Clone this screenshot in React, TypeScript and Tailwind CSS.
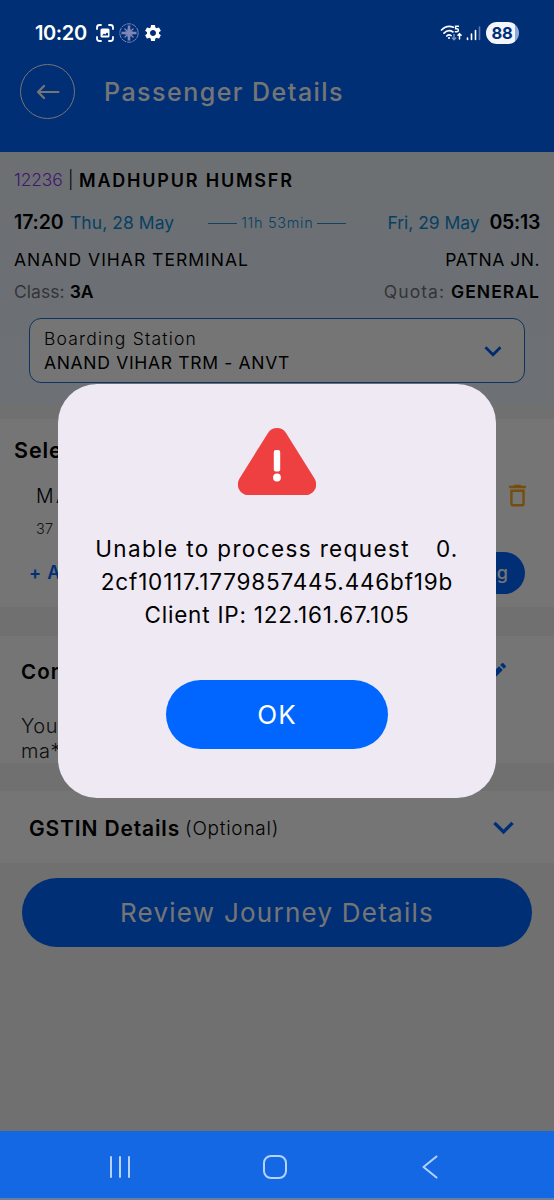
import { MdDeleteOutline, MdEdit, MdKeyboardArrowDown, MdSettings } from "react-icons/md";

function StatusBar() {
    return (
        <div className="absolute top-0 left-0 z-20 flex h-[66px] w-full items-center justify-between pl-[35px] pr-[35px] text-white">
            <div className="flex items-center">
                <span className="w-[60px] text-[20px] font-semibold tracking-[-0.4px]">10:20</span>
                <svg width="20" height="20" viewBox="0 0 20 20" fill="none" stroke="currentColor" strokeWidth="1.800" strokeLinecap="round">
                    <path d="M2 6V4.5A2.5 2.5 0 0 1 4.500 2H6M14 2h1.500A2.500 2.500 0 0 1 18 4.500V6M18 14v1.500a2.500 2.500 0 0 1-2.500 2.500H14M6 18H4.500A2.500 2.500 0 0 1 2 15.500V14" />
                    <rect x="5.500" y="5.500" width="9" height="9" rx="1.500" fill="currentColor" stroke="none" />
                    <path d="M7 12.500 9 10.500l1.200 1L12 9.500l1 1v2z" fill="#002f75" stroke="none" />
                </svg>
                <svg className="ml-[4px]" width="20" height="20" viewBox="0 0 20 20" fill="none" stroke="#7f86b8">
                    <circle cx="10" cy="10" r="9.200" strokeWidth="1" strokeDasharray="5 0.800" />
                    <path d="M10 2.500v15M2.500 10h15" strokeWidth="2.600" />
                    <path d="M5.500 5.500l9 9M14.500 5.500l-9 9" strokeWidth="1.200" />
                    <circle cx="10" cy="10" r="3.500" strokeWidth="1" />
                </svg>
                <MdSettings className="ml-[4px]" size={20} />
            </div>
            <div className="flex items-center">
                <svg width="23" height="18" viewBox="0 0 23 18" fill="none" stroke="currentColor" strokeLinecap="round">
                    <path d="M1.500 6C5 2.300 9.500 1.600 13.500 3.200M4 9.200c2.500-2.600 6-3 9-1.300M6.800 12c1.300-1.200 2.900-1.300 4.300-.4" strokeWidth="1.700" />
                    <circle cx="9" cy="14" r="1.100" fill="currentColor" stroke="none" />
                    <path d="M18.500 2.200H15.600V4.700h1.300a1.500 1.500 0 0 1 0 3H15.300" strokeWidth="1.400" />
                    <path d="M14 10.500v5M12.300 14l1.700 1.700 1.700-1.700" stroke="#7796cb" strokeWidth="1.400" />
                    <path d="M19.500 15v-5M17.900 11.300l1.600-1.600 1.600 1.600" strokeWidth="1.500" />
                </svg>
                <svg className="ml-[3px]" width="16" height="16" viewBox="0 0 16 16" stroke="currentColor" strokeWidth="1.600" strokeLinecap="round">
                    <path d="M1.500 13v1.500M5.500 9v5.500M9.500 5.500v9" />
                    <path d="M13.500 2v12.500" stroke="#5877b3" />
                </svg>
                <div className="ml-[4px] flex h-[22px] w-[33px] items-center justify-center rounded-full bg-linear-to-r from-[#f3f6fd] from-88% to-[#93a9d4] to-88% pr-px text-[16.500px] leading-[22px] font-bold tracking-[-0.300px] text-[#002f75]">
                    88
                </div>
            </div>
        </div>
    );
}

function JourneyCard() {
    return (
        <section className="h-[252px] bg-linear-to-b from-[#ebf4fb] to-[#edf5fd] px-[14px] text-[17.500px] text-black">
            <div className="flex h-[56px] items-center whitespace-pre">
                <span className="w-[54px] font-light tracking-[-0.200px] text-[#9333ea]">12236</span>
                <span className="w-[11px] font-light">|</span>
                <span className="text-[18px] font-semibold tracking-[1.800px]">MADHUPUR HUMSFR</span>
            </div>
            <div className="flex h-[28px] items-center pt-[2px]">
                <span className="w-[56px] text-[19.500px] font-semibold tracking-[-0.100px]">17:20</span>
                <span className="tracking-[0.050px] text-[#0f8bd8]">Thu, 28 May</span>
                <span className="ml-[34px] h-px w-[29px] bg-[#2a8fcc]" />
                <span className="mx-[4px] text-[14.500px] font-light tracking-[0.700px] text-[#0f8bd8]">11h 53min</span>
                <span className="h-px w-[29px] bg-[#2a8fcc]" />
                <span className="ml-auto tracking-[-0.050px] text-[#0f8bd8]">Fri, 29 May</span>
                <span className="ml-[10px] text-[19.500px] font-semibold tracking-[-0.300px]">05:13</span>
            </div>
            <div className="flex h-[48px] items-center justify-between">
                <span className="tracking-[1px]">ANAND VIHAR TERMINAL</span>
                <span className="tracking-[0.500px]">PATNA JN.</span>
            </div>
            <div className="flex h-[16px] items-center justify-between">
                <span className="tracking-[0.050px] text-[#6f7480]">
                    Class: <b className="font-semibold text-black">3A</b>
                </span>
                <span className="tracking-[1.050px] text-[#6f7480]">
                    Quota: <b className="font-semibold text-black">GENERAL</b>
                </span>
            </div>
            <div className="mx-[15px] mt-[18px] flex h-[65px] items-center justify-between rounded-[12px] border border-[#1e6fd0] bg-white pr-[14px] pl-[14px]">
                <div className="pt-px leading-[24.500px]">
                    <div className="font-light tracking-[1.200px]">Boarding Station</div>
                    <div className="tracking-[0.680px]">ANAND VIHAR TRM - ANVT</div>
                </div>
                <MdKeyboardArrowDown size={34} className="text-[#0060f0]" />
            </div>
        </section>
    );
}

function PassengerCard() {
    return (
        <section className="mt-[15px] h-[188px] bg-white pr-[29px]">
            <h2 className="flex h-[62px] items-center pl-[14px] text-[21.500px] font-semibold tracking-[0.900px]">Select Passengers</h2>
            <div className="flex h-[29px] items-center justify-between pl-[36px]">
                <span className="pt-[2px] text-[19.500px] font-light tracking-[2.500px]">MANOJ</span>
                <MdDeleteOutline size={29} className="-mr-[7px] text-[#ffaa20]" />
            </div>
            <div className="flex h-[36px] items-center pt-px pl-[36px] text-[14.500px] font-light tracking-[0.300px] text-[#333]">37 | Male</div>
            <div className="flex h-[53px] items-center justify-between pl-[29px] text-[18px] font-semibold">
                <span className="tracking-[0.800px] text-[#0066ff]">+ Add</span>
                <span className="flex h-[42px] items-center rounded-full bg-[#0066ff] px-[17px] font-medium text-white">Add Existing</span>
            </div>
        </section>
    );
}

function ContactCard() {
    return (
        <section className="mt-[29px] h-[127px] bg-white px-[21px]">
            <div className="flex h-[72px] items-center justify-between">
                <h2 className="text-[20.500px] font-semibold tracking-[1.100px]">Contact Details</h2>
                <MdEdit size={24} className="mr-[24px] text-[#0066ff]" />
            </div>
            <div className="pt-[6px] text-[20px] leading-[25px] font-light tracking-[0.500px] text-[#222]">
                <div>Your ticket will be sent to</div>
                <div>ma***@gmail.com</div>
            </div>
        </section>
    );
}

function ErrorDialog() {
    return (
        <div className="absolute top-0 left-0 z-10 flex h-[1131px] w-full items-start justify-center bg-black/54 pt-[384px]">
            <div className="flex h-[414px] w-[438px] flex-col items-center rounded-[39px] bg-[#eee9f3] pt-[44px] text-black">
                <svg width="78" height="67" viewBox="0 0 78 67">
                    <path d="M39 0c4 0 7 1.800 9 5l28.500 45.500C81 58 76 67 67.500 67h-57C2 67-3 58 1.500 50.500L30 5c2-3.200 5-5 9-5z" fill="#ee4040" />
                    <rect x="35.800" y="22" width="6.400" height="21.500" rx="2" fill="#fff" />
                    <circle cx="39" cy="49.500" r="3.900" fill="#fff" />
                </svg>
                <div className="mt-[37px] text-center text-[22.500px] leading-[33px]">
                    <div className="tracking-[1.370px]">
                        Unable to process request<span className="ml-[26px]">0.</span>
                    </div>
                    <div className="tracking-[0.820px]">2cf10117.1779857445.446bf19b</div>
                    <div className="tracking-[0.780px]">Client IP: 122.161.67.105</div>
                </div>
                <button className="mt-[49px] h-[69px] w-[222px] rounded-full bg-[#0066ff] text-[26px] tracking-[1px] text-white">OK</button>
            </div>
        </div>
    );
}

function NavBar() {
    return (
        <nav className="absolute bottom-0 left-0 z-20 h-[69px] w-full border-b-2 border-[#687f9f] bg-[#1568e3] text-[#b5d3ff]">
            <div className="flex h-[71px] items-center justify-between pr-[112px] pl-[108px]">
                <svg width="24" height="24" viewBox="0 0 24 24" stroke="currentColor" strokeWidth="2" strokeLinecap="round">
                    <path d="M3 2v20M12 2v20M21 2v20" />
                </svg>
                <svg width="24" height="24" viewBox="0 0 24 24" fill="none" stroke="currentColor" strokeWidth="2">
                    <rect x="1" y="1" width="22" height="22" rx="7" />
                </svg>
                <svg width="24" height="24" viewBox="0 0 24 24" fill="none" stroke="currentColor" strokeWidth="2" strokeLinecap="round" strokeLinejoin="round">
                    <path d="M18.500 1.500 5.500 12l13 10.500" />
                </svg>
            </div>
        </nav>
    );
}

export default function App() {
    return (
        <div className="relative h-[1200px] w-[554px] overflow-hidden bg-[#f4f4f4] font-[Inter,sans-serif]">
            <StatusBar />
            <header className="flex h-[152px] items-end bg-[#0066ff] pl-[20px] pb-[33px] text-white">
                <div className="flex h-[55px] w-[55px] items-center justify-center rounded-full border-[1.500px] border-white">
                    <svg width="24" height="16" viewBox="0 0 24 16" fill="none" stroke="currentColor" strokeWidth="2.200" strokeLinecap="round" strokeLinejoin="round">
                        <path d="M22.500 8H2M8 2 2 8l6 6" />
                    </svg>
                </div>
                <h1 className="ml-[29px] text-[25px] leading-[54px] font-medium tracking-[1.480px]">Passenger Details</h1>
            </header>
            <JourneyCard />
            <PassengerCard />
            <ContactCard />
            <section className="mt-[28px] flex h-[72px] items-center bg-white pr-[30px] pl-[29px]">
                <h2 className="pt-[3px] text-[21px] font-semibold tracking-[0.850px]">GSTIN Details</h2>
                <span className="ml-[5px] pt-[5px] text-[19px] font-light tracking-[0.750px]">(Optional)</span>
                <MdKeyboardArrowDown size={41} className="ml-auto text-[#0066ff]" />
            </section>
            <button className="mx-[22px] mt-[15px] h-[69px] w-[510px] rounded-full bg-[#0066ff] text-[26px] tracking-[1.250px] text-white">
                Review Journey Details
            </button>
            <ErrorDialog />
            <NavBar />
        </div>
    );
}
